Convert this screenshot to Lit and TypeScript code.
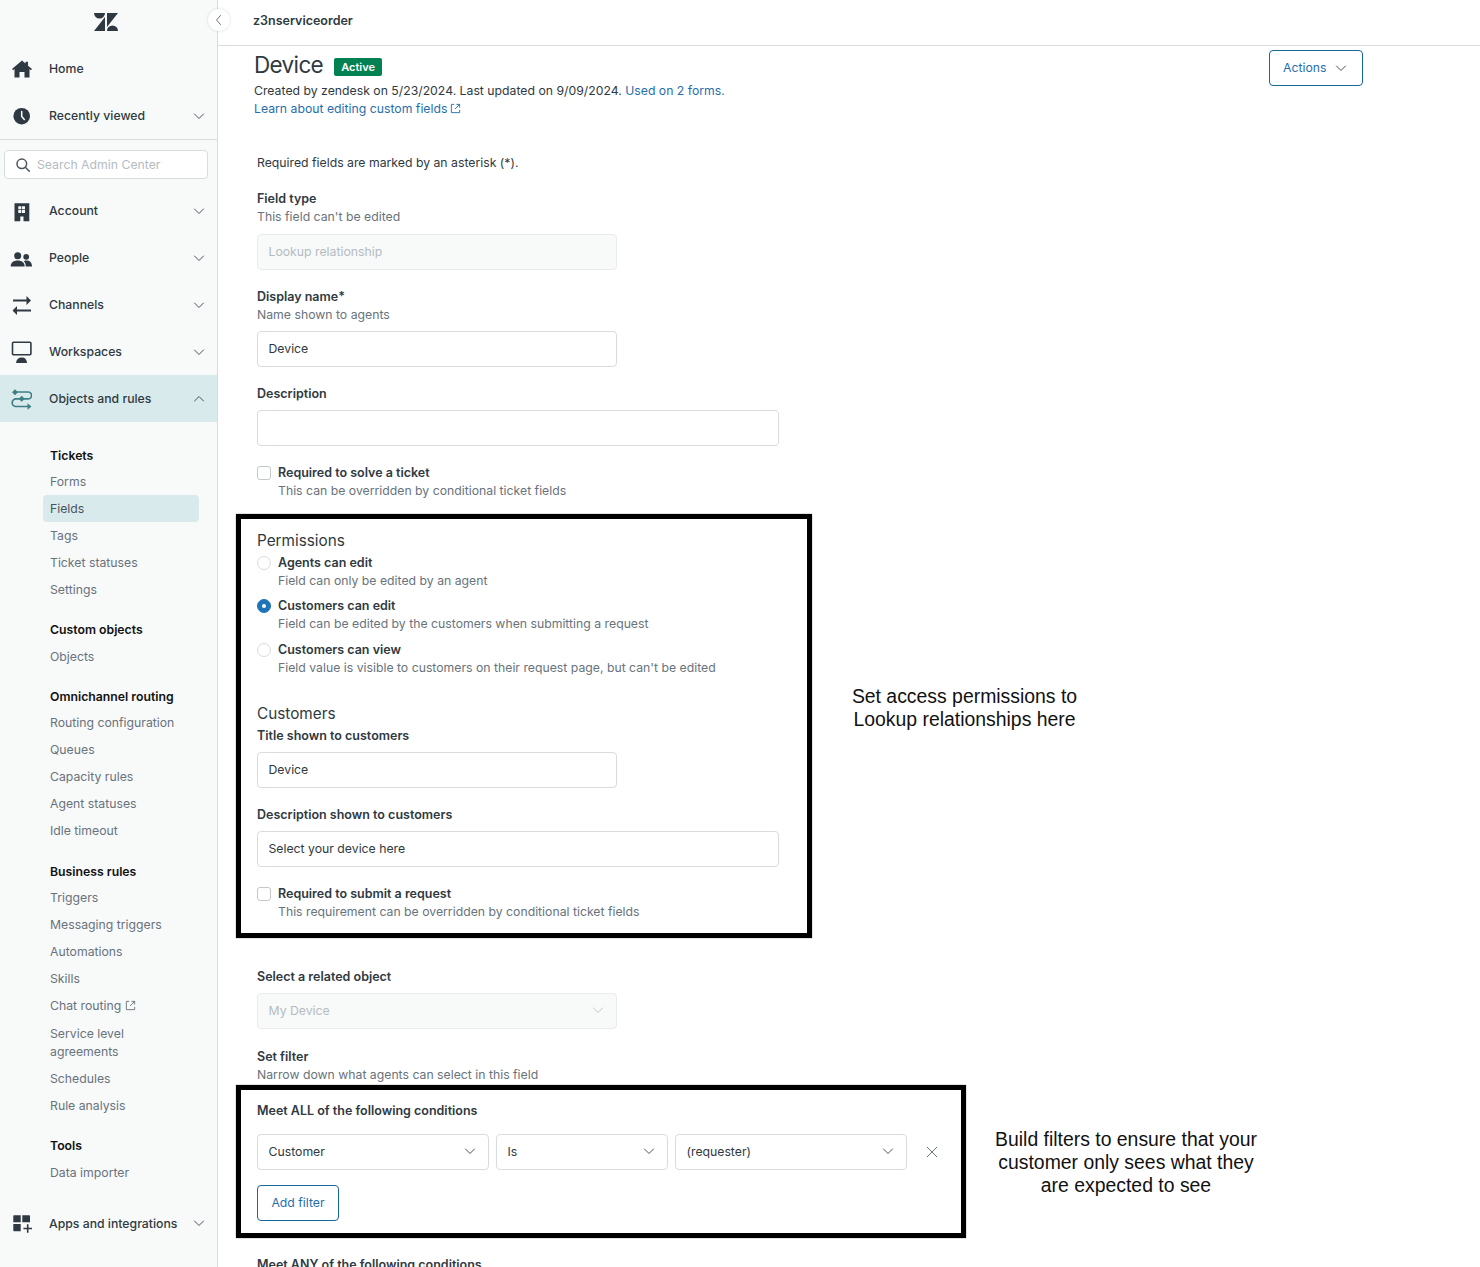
import { LitElement, html, css, svg } from "lit";
import { customElement } from "lit/decorators.js";

const chev = (cls = "chev") => html`<svg class=${cls} viewBox="0 0 12 12" width="12" height="12" fill="none" stroke="currentColor" stroke-width="1"><path d="M1.500 4l4.500 4.500L10.500 4" stroke-linecap="round" stroke-linejoin="round"/></svg>`;
const chevUp = html`<svg class="chev" viewBox="0 0 12 12" width="12" height="12" fill="none" stroke="currentColor" stroke-width="1"><path d="M1.500 8L6 3.500 10.500 8" stroke-linecap="round" stroke-linejoin="round"/></svg>`;
const ext = html`<svg class="ext" viewBox="0 0 12 12" width="11" height="11" fill="none" stroke="currentColor" stroke-width="1"><path d="M4.500 1.500h-3v9h9v-3M7 1.500h3.500V5M10.500 1.500L5.500 6.500"/></svg>`;

const icons: Record<string, unknown> = {
  home: svg`<path d="M12 2.500l3.500 3V3.800H18v3.900l4 3.400-1 1.200-1.500-1.300v8.500h-5V14h-5v5.500h-5V11L3 12.300l-1-1.200z" fill="currentColor"/>`,
  clock: svg`<circle cx="11.700" cy="11.200" r="8.300" fill="currentColor"/><path d="M11.700 6.500v5l2.600 2.900" stroke="#fff" stroke-width="1.500" fill="none" stroke-linecap="round"/>`,
  account: svg`<path fill-rule="evenodd" d="M4.500 3.200h14.800v18h-5.800v-4.700H10.300v4.700H4.500zM8.300 6.200v3h3v-3zm3.700 0v3h3v-3zM8.300 10v3h3v-3zm3.700 0v3h3v-3z" fill="currentColor"/>`,
  people: svg`<circle cx="7.700" cy="8.800" r="3.500" fill="currentColor"/><circle cx="16.200" cy="9.800" r="2.900" fill="currentColor"/><path d="M.7 19.500c0-4 3-6 7-6s7 2 7 6zM15.800 19.500c0-2.400-.7-4-2-5.300 1-.5 1.900-.6 2.700-.6 3.200 0 5.500 2 5.500 5.900z" fill="currentColor"/>`,
  channels: svg`<path d="M3 6.500h14.500M6 16.500h15" stroke="currentColor" stroke-width="1.800" fill="none"/><path d="M16.500 2l4.500 4.500-4.500 4.500zM7 12l-4.500 4.500L7 21z" fill="currentColor"/>`,
  work: svg`<rect x="2.500" y="1.300" width="18.400" height="12.500" rx="1" fill="none" stroke="currentColor" stroke-width="1.600"/><path d="M6 22c.3-3.500 2.300-5.500 5.700-5.500s5 2 5.300 5.500z" fill="currentColor"/>`,
  objects: svg`<path d="M5 4h13a3.500 3.400 0 0 1 0 6.900H6a3.700 3.700 0 0 0 0 7.600h12" fill="none" stroke="currentColor" stroke-width="1.700"/><path d="M5 1.200l3 3-3 3-3-3zM11.700 7.800l3 3-3 3-3-3zM17.500 15.300l4 3.200-4 3.200z" fill="currentColor"/>`,
  apps: svg`<path d="M3.300 4a.8.8 0 0 1 .8-.8h6.600v7H3.300zM12.300 3.200h6.900a.8.8 0 0 1 .8.800v6.200h-7.700zM3.300 11.900h7.400v7.300H4.100a.8.800 0 0 1-.8-.8z" fill="currentColor"/><path d="M17.700 12.200v8.600M13.400 16.500H22" stroke="currentColor" stroke-width="1.600" fill="none"/>`,
};

type Nav = { icon: string; label: string; open?: boolean; noChev?: boolean };
const navA: Nav[] = [
  { icon: "home", label: "Home", noChev: true },
  { icon: "clock", label: "Recently viewed" },
];
const navB: Nav[] = [
  { icon: "account", label: "Account" },
  { icon: "people", label: "People" },
  { icon: "channels", label: "Channels" },
  { icon: "work", label: "Workspaces" },
  { icon: "objects", label: "Objects and rules", open: true },
];
const groups: { title: string; items: (string | { t: string; ext?: boolean; on?: boolean; two?: boolean })[] }[] = [
  { title: "Tickets", items: ["Forms", { t: "Fields", on: true }, "Tags", "Ticket statuses", "Settings"] },
  { title: "Custom objects", items: ["Objects"] },
  { title: "Omnichannel routing", items: ["Routing configuration", "Queues", "Capacity rules", "Agent statuses", "Idle timeout"] },
  { title: "Business rules", items: ["Triggers", "Messaging triggers", "Automations", "Skills", { t: "Chat routing", ext: true }, { t: "Service level agreements", two: true }, "Schedules", "Rule analysis"] },
  { title: "Tools", items: ["Data importer"] },
];

@customElement("app-root")
export class AppRoot extends LitElement {
  static styles = css`
    :host { display: block; font-family: Inter, "Noto Sans", sans-serif; font-size: 12.25px; line-height: 18px; color: #2f3941; }
    * { box-sizing: border-box; }
    .page { display: flex; height: 1267px; overflow: hidden; background: #fff; position: relative; }
    .side { width: 218px; flex: none; background: #f8f9f9; border-right: 1px solid #d8dcde; }
    .logo { height: 45px; display: flex; align-items: center; justify-content: center; color: #2f3941; padding-bottom: 1px; padding-right: 6px; }
    .nav { height: 47px; display: flex; align-items: center; padding-left: 10px; padding-right: 12px; padding-top: 1px; font-weight: 500; color: #2f3941; }
    .nav .ic { width: 22px; height: 22px; flex: none; margin-right: 17px; margin-top: -1px; }
    .nav .lbl { flex: 1; }
    .nav.open { background: #d9eaec; }
    .nav.open .ic { color: #3e7f85; }
    .chev { flex: none; color: #49545c; margin-top: -1px; }
    .rule { height: 1px; background: #d8dcde; }
    .search { margin: 10px 9px 8px 4px; height: 29px; border: 1px solid #d8dcde; border-radius: 4px; background: #fff; display: flex; align-items: center; padding-left: 11px; color: #b4bcc2; gap: 7px; }
    .search svg { color: #49545c; flex: none; }
    .sub { padding: 20.6px 0 0 43px; }
    .grp { margin-bottom: 14px; }
    .gt { height: 25.6px; padding: 1px 0 0 7px; display: flex; align-items: center; font-weight: 600; color: #111; }
    .it { min-height: 27px; width: 156px; padding: 5px 7px 4px; color: #68737d; border-radius: 4px; display: flex; align-items: center; gap: 4px; }
    .it.on { background: #d9eaec; color: #49545c; }
    .ext { flex: none; }
    .it.two { padding-top: 6px; padding-bottom: 4px; width: 130px; height: 46px; }
    .apps { margin-top: 14px; }

    .collapse { position: absolute; left: 208px; top: 9px; width: 22px; height: 22px; border-radius: 50%; background: #fff; box-shadow: 0 0 3px rgba(47,57,65,.18); display: flex; align-items: center; justify-content: center; color: #68737d; }

    .main { flex: 1; min-width: 0; }
    .top { height: 46px; border-bottom: 1px solid #d8dcde; padding: 0 0 4px 35px; display: flex; align-items: center; font-weight: 600; font-size: 12.5px; color: #2f3941; }
    .head { display: flex; justify-content: space-between; padding: 4px 117px 0 36px; }
    .tl { display: flex; align-items: center; height: 30px; gap: 11px; margin-bottom: 1px; }
    h1 { margin: 0; font-size: 22.5px; font-weight: 400; line-height: 30px; color: #2f3941; letter-spacing: -0.65px; }
    .badge { background: #038153; color: #fff; font-size: 11px; font-weight: 600; height: 18px; width: 48px; border-radius: 2px; display: flex; align-items: center; justify-content: center; margin-top: 3px; }
    a { color: #1f6fae; text-decoration: none; }
    .learn { display: flex; align-items: center; gap: 3px; }
    .btn { height: 36px; border: 1px solid #17679c; border-radius: 4px; color: #1f6fae; display: flex; align-items: center; background: #fff; }
    .act { width: 94px; padding-left: 13px; gap: 9px; }
    .form { padding: 36px 0 0 39px; }
    .f { display: block; }
    .lab { font-weight: 600; color: #2f3941; font-size: 12.5px; height: 18px; padding-top: 1px; }
    .hint { color: #68737d; height: 18px; padding-top: 1px; }
    .inp { height: 36px; border: 1px solid #d8dcde; border-radius: 4px; padding: 0 12px 1px 10.5px; display: flex; align-items: center; justify-content: space-between; margin-top: 8px; background: #fff; color: #2f3941; }
    .w360 { width: 360px; }
    .w522 { width: 522px; }
    .dis { background: #f8f9f9; border-color: #e9ebed; color: #b4bcc2; }
    .dis .chev { color: #c2c8cc; }
    .mt18 { margin-top: 18px; }
    .mt17 { margin-top: 17px; }
    .mt9 { margin-top: 9px; }
    .check { display: flex; gap: 7px; }
    .box { width: 14px; height: 14px; flex: none; border: 1px solid #c2c8cc; border-radius: 3px; background: #fff; margin-top: 3px; }
    .radio { width: 14px; height: 14px; flex: none; border: 1px solid #d8dcde; border-radius: 50%; background: #fff; margin-top: 3px; display: flex; align-items: center; justify-content: center; }
    .radio.on { background: #1f73b7; border-color: #1f73b7; }
    .radio.on::after { content: ""; width: 4px; height: 4px; border-radius: 50%; background: #fff; }
    .row { display: flex; align-items: flex-start; margin-left: -21px; }
    .frame { border: 5px solid #000; padding-left: 16px; flex: none; box-shadow: 0 0 1px #555; }
    .fr1 { width: 576px; height: 424px; padding-top: 10px; margin-top: 15px; }
    .fr2 { width: 730px; height: 153px; padding-top: 11px; margin-top: 2px; }
    h2 { margin: 0; font-size: 15.3px; line-height: 22px; height: 22px; padding-top: 1px; font-weight: 400; color: #2f3941; }
    .cust { margin-top: 26px; }
    .t2 { margin-top: 2px; }
    .related { margin-top: 29px; }
    .r2 { margin-top: 7px; }
    .r3 { margin-top: 8px; }
    .rad-first { margin-top: 2px; }
    .note { font-family: "Liberation Sans", Arial, sans-serif; font-size: 19.4px; line-height: 23px; color: #111; text-align: center; white-space: nowrap; }
    .n1 { margin: 186px 0 0 39.5px; width: 226px; }
    .n2 { margin: 45px 0 0 29px; width: 262px; }
    .filters { display: flex; gap: 7px; margin-top: 15px; align-items: center; }
    .filters .inp { margin-top: 0; }
    .s232 { width: 232px; }
    .s172 { width: 172px; }
    .x { margin-left: 12px; color: #68737d; }
    .add { width: 82px; justify-content: center; margin-top: 15px; }
    .plain { height: 18px; padding-top: 1px; }
    .learn { height: 18px; padding-top: 1px; }
  `;

  private navItem(n: Nav) {
    return html`<div class="nav ${n.open ? "open" : ""}">
      <svg class="ic" viewBox="0 0 22 22">${icons[n.icon]}</svg>
      <span class="lbl">${n.label}</span>
      ${n.noChev ? "" : n.open ? chevUp : chev()}
    </div>`;
  }

  private radio(on: boolean, label: string, hint: string, cls: string) {
    return html`<div class="check ${cls}"><span class="radio ${on ? "on" : ""}"></span><div><div class="lab">${label}</div><div class="hint">${hint}</div></div></div>`;
  }

  private check(label: string, hint: string, cls: string) {
    return html`<div class="check ${cls}"><span class="box"></span><div><div class="lab">${label}</div><div class="hint">${hint}</div></div></div>`;
  }

  render() {
    return html`<div class="page">
      <aside class="side">
        <div class="logo">
          <svg viewBox="0 0 24 18" width="24" height="18" fill="currentColor"><path d="M0 0h11a5.500 5.500 0 0 1-11 0zM13 0h11L13 14zM11 4v14H0zM13 18a5.500 5.500 0 0 1 11 0z"/></svg>
        </div>
        ${navA.map((n) => this.navItem(n))}
        <div class="rule"></div>
        <div class="search">
          <svg viewBox="0 0 14 14" width="14" height="14" fill="none" stroke="currentColor" stroke-width="1.500"><circle cx="5.800" cy="5.800" r="4.800"/><path d="M9.300 9.300L13.300 13.300" stroke-linecap="round"/></svg>
          Search Admin Center
        </div>
        ${navB.map((n) => this.navItem(n))}
        <div class="sub">
          ${groups.map((g) => html`<div class="grp">
            <div class="gt">${g.title}</div>
            ${g.items.map((i) => {
              const o = typeof i === "string" ? ({ t: i } as { t: string; ext?: boolean; on?: boolean; two?: boolean }) : i;
              return html`<div class="it ${o.on ? "on" : ""} ${o.two ? "two" : ""}"><span>${o.t}</span>${o.ext ? ext : ""}</div>`;
            })}
          </div>`)}
        </div>
        <div class="apps">${this.navItem({ icon: "apps", label: "Apps and integrations" })}</div>
      </aside>
      <div class="collapse"><svg viewBox="0 0 12 12" width="12" height="12" fill="none" stroke="currentColor"><path d="M7.500 1.500L3.500 6l4 4.500" stroke-linecap="round"/></svg></div>
      <main class="main">
        <div class="top">z3nserviceorder</div>
        <div class="head">
          <div>
            <div class="tl"><h1>Device</h1><span class="badge">Active</span></div>
            <div class="plain">Created by zendesk on 5/23/2024. Last updated on 9/09/2024. <a>Used on 2 forms.</a></div>
            <a class="learn">Learn about editing custom fields ${ext}</a>
          </div>
          <div class="btn act">Actions ${chev()}</div>
        </div>
        <div class="form">
          <div class="plain">Required fields are marked by an asterisk (*).</div>
          <div class="f mt18"><div class="lab">Field type</div><div class="hint">This field can't be edited</div>
            <div class="inp dis w360 mt9">Lookup relationship</div></div>
          <div class="f mt17"><div class="lab">Display name*</div><div class="hint">Name shown to agents</div>
            <div class="inp w360">Device</div></div>
          <div class="f mt17"><div class="lab">Description</div><div class="inp w522"></div></div>
          ${this.check("Required to solve a ticket", "This can be overridden by conditional ticket fields", "mt17")}
          <div class="row">
            <div class="frame fr1">
              <h2>Permissions</h2>
              ${this.radio(false, "Agents can edit", "Field can only be edited by an agent", "rad-first")}
              ${this.radio(true, "Customers can edit", "Field can be edited by the customers when submitting a request", "r2")}
              ${this.radio(false, "Customers can view", "Field value is visible to customers on their request page, but can't be edited", "r3")}
              <h2 class="cust">Customers</h2>
              <div class="f t2"><div class="lab">Title shown to customers</div><div class="inp w360">Device</div></div>
              <div class="f mt17"><div class="lab">Description shown to customers</div><div class="inp w522">Select your device here</div></div>
              ${this.check("Required to submit a request", "This requirement can be overridden by conditional ticket fields", "mt17")}
            </div>
            <div class="note n1">Set access permissions to<br />Lookup relationships here</div>
          </div>
          <div class="f related"><div class="lab">Select a related object</div><div class="inp dis w360">My Device ${chev()}</div></div>
          <div class="f mt18"><div class="lab">Set filter</div><div class="hint">Narrow down what agents can select in this field</div></div>
          <div class="row">
            <div class="frame fr2">
              <div class="lab">Meet ALL of the following conditions</div>
              <div class="filters">
                <div class="inp s232">Customer ${chev()}</div>
                <div class="inp s172">Is ${chev()}</div>
                <div class="inp s232">(requester) ${chev()}</div>
                <svg class="x" viewBox="0 0 12 12" width="12" height="12" fill="none" stroke="currentColor"><path d="M1 1l10 10M11 1L1 11"/></svg>
              </div>
              <div class="btn add">Add filter</div>
            </div>
            <div class="note n2">Build filters to ensure that your<br />customer only sees what they<br />are expected to see</div>
          </div>
          <div class="lab mt17">Meet ANY of the following conditions</div>
        </div>
      </main>
    </div>`;
  }
}
